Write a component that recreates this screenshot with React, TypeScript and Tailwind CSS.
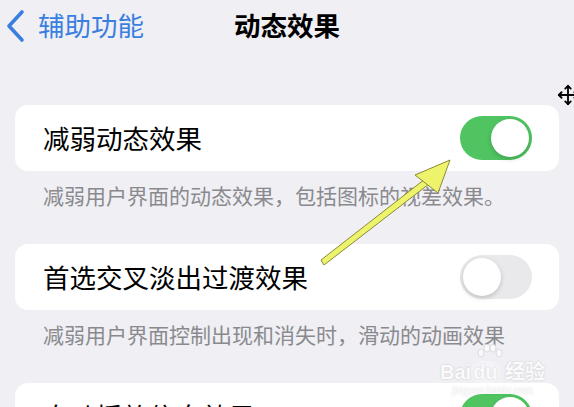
import { Move } from "lucide-react"

function Toggle({ on }: { on: boolean }) {
  return (
    <div
      className={
        on
          ? "w-[72px] h-[44px] rounded-full bg-[#4fc461] flex items-center justify-end p-[3px] shrink-0"
          : "w-[72px] h-[44px] rounded-full bg-[#e9e9eb] flex items-center justify-start p-[3px] shrink-0"
      }
    >
      <div className="w-[38px] h-[38px] rounded-full bg-white shadow-[0_2px_5px_rgba(0,0,0,0.18)]" />
    </div>
  )
}

function Row({ label, on }: { label: string; on: boolean }) {
  return (
    <div className="mx-[15px] h-[66px] rounded-[13px] bg-white flex items-center justify-between pl-[28px] pr-[27px]">
      <span className="text-[26.5px] leading-none text-black">{label}</span>
      <Toggle on={on} />
    </div>
  )
}

function Note({ text }: { text: string }) {
  return <p className="mt-[12px] mb-[37px] pl-[43px] text-[21px] leading-[24px] text-[#8a8a8e]">{text}</p>
}

export default function App() {
  return (
    <div className="relative w-[574px] h-[407px] overflow-hidden bg-[#efeff4] font-['Noto_Sans_CJK_SC','Noto_Sans',sans-serif]">
      {/* nav bar */}
      <div className="h-[51px] grid grid-cols-[1fr_auto_1fr] items-center">
        <div className="flex items-center gap-[12px] pl-[4px] text-[#3a7ee0]">
          <svg width="22" height="34" viewBox="0 0 22 34" fill="none">
            <path d="M18 3 L5 17 L18 31" stroke="#3a7ee0" strokeWidth="3.6" strokeLinecap="round" strokeLinejoin="round" />
          </svg>
          <span className="text-[26.5px] leading-none">辅助功能</span>
        </div>
        <h1 className="text-[26.5px] leading-none font-bold text-black">动态效果</h1>
        <div />
      </div>

      <div className="mt-[54px]">
        <Row label="减弱动态效果" on={true} />
        <Note text="减弱用户界面的动态效果，包括图标的视差效果。" />
        <Row label="首选交叉淡出过渡效果" on={false} />
        <Note text="减弱用户界面控制出现和消失时，滑动的动画效果" />
        <Row label="自动播放信息效果" on={true} />
      </div>

      {/* annotation arrow */}
      <svg className="absolute left-0 top-0 pointer-events-none" width="574" height="407" viewBox="0 0 574 407">
        <g stroke="#8a8a3a" strokeWidth="1" strokeLinejoin="round" fill="#eef36c">
          <path d="M321 260 L425 179 L429 184 L324 265 Z" />
          <path d="M450 160 L415 175 L438 193 Z" />
        </g>
      </svg>

      {/* cursor */}
      <div className="absolute left-[557px] top-[84px] text-black">
        <Move size={22} strokeWidth={2} />
      </div>

      {/* watermark */}
      <div className="absolute left-[440px] top-[344px] flex flex-col items-center whitespace-nowrap text-white opacity-70 pointer-events-none">
        <svg width="30" height="18" viewBox="0 0 30 18" className="ml-[-8px]">
          <g fill="#ffffff" stroke="#c9c9ce" strokeWidth="0.8">
            <ellipse cx="7" cy="9" rx="3" ry="4" />
            <ellipse cx="13" cy="4" rx="3" ry="4" />
            <ellipse cx="19" cy="4" rx="3" ry="4" />
            <ellipse cx="25" cy="9" rx="3" ry="4" />
          </g>
        </svg>
        <span className="text-[20px] leading-none font-bold font-['Liberation_Sans','Noto_Sans_CJK_SC',sans-serif] [text-shadow:0_0_2px_rgba(0,0,0,0.25)]">
          Bai<span className="rounded-full bg-white/50 px-[2px]">du</span> 经验
        </span>
        <span className="mt-[4px] text-[10px] leading-none font-['Liberation_Sans',sans-serif] [text-shadow:0_0_2px_rgba(0,0,0,0.25)]">
          jingyan.baidu.com
        </span>
      </div>
    </div>
  )
}
